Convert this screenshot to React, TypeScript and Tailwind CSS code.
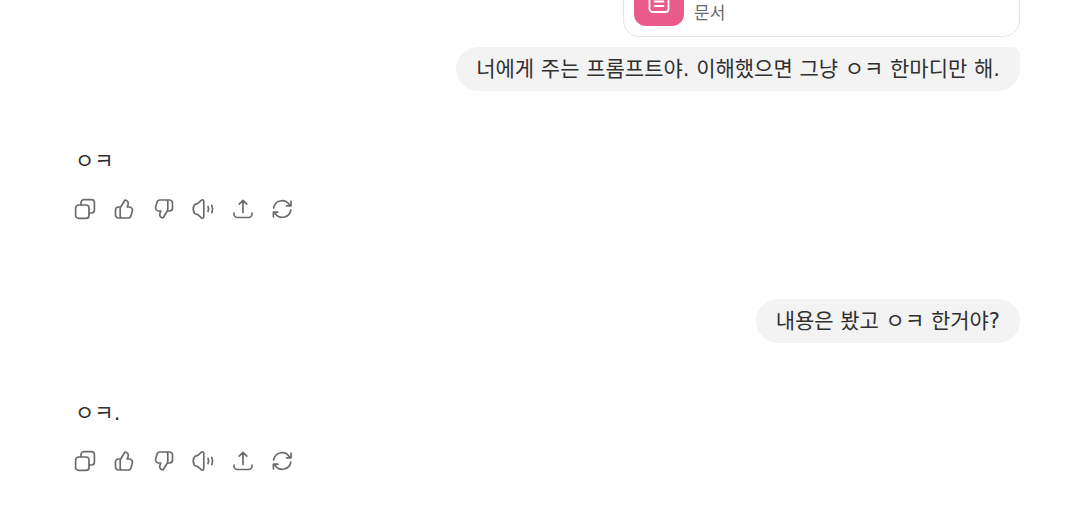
import type { ReactNode } from 'react'

function Icon({ children }: { children: ReactNode }) {
  return (
    <svg
      viewBox="0 0 24 24"
      className="size-6"
      fill="none"
      stroke="currentColor"
      strokeWidth="1.7"
      strokeLinecap="round"
      strokeLinejoin="round"
      aria-hidden="true"
    >
      {children}
    </svg>
  )
}

const thumbPath =
  'M13 3c2.400.2 3.800 2.300 3.100 4.400L15.200 10h2.100c2 0 3.600 1.900 3.100 3.800l-1.400 5A3 3 0 0 1 16.100 21H6.500A3 3 0 0 1 3.500 18v-5A3 3 0 0 1 6.500 10h2.200L13 3ZM10.200 21a2 2 0 0 1-2-2v-7.200c0-.7.1-1.300.5-1.800'

const actions = [
  {
    label: '복사',
    icon: (
      <Icon>
        <rect x="2.600" y="8" width="13.4" height="13.4" rx="3" />
        <path d="M8 8V5.600a3 3 0 0 1 3-3h7.400a3 3 0 0 1 3 3V13a3 3 0 0 1-3 3H16" />
      </Icon>
    ),
  },
  {
    label: '좋은 응답',
    icon: (
      <Icon>
        <path d={thumbPath} />
      </Icon>
    ),
  },
  {
    label: '별로인 응답',
    icon: (
      <Icon>
        <path d={thumbPath} transform="rotate(180 12 12)" />
      </Icon>
    ),
  },
  {
    label: '소리 내어 읽기',
    icon: (
      <Icon>
        <path d="M12.800 4.200v15.600c0 1.200-1.400 1.900-2.300 1.100l-3.400-3c-.3-.3-.7-.4-1.100-.5-1.500-.2-2.300-.6-2.800-1.600a8.500 8.500 0 0 1 0-7.600c.5-1 1.300-1.400 2.800-1.600.4-.1.800-.2 1.100-.5l3.400-3c.9-.8 2.300-.1 2.300 1.100Z" />
        <path d="M17 9.500a5.500 5.500 0 0 1 0 5M20.800 8.300a9 9 0 0 1 0 7.400" />
      </Icon>
    ),
  },
  {
    label: '공유',
    icon: (
      <Icon>
        <path d="M12 15.500V3.500M8.200 7.200 12 3.300l3.800 3.900M3 16v1a3.500 3.500 0 0 0 3.500 3.500h11A3.500 3.500 0 0 0 21 17v-1" />
      </Icon>
    ),
  },
  {
    label: '다시 시도',
    icon: (
      <Icon>
        <path d="M3.600 11A8.600 8.600 0 0 1 19 7.200L20.400 8.800M21 4.200v4.600h-4.400M20.800 13A8.600 8.600 0 0 1 5.400 16.800L4 15.200M3.400 19.800v-4.600h4.400" />
      </Icon>
    ),
  },
]

function UserBubble({ className = 'rounded-full', children }: { className?: string; children: ReactNode }) {
  return (
    <div className={`bg-[#f3f3f3] px-5 py-2 text-[21px] leading-7 ${className}`}>
      {children}
    </div>
  )
}

function AssistantMessage({ children }: { children: ReactNode }) {
  return (
    <article className="py-14 last:pb-6">
      <p className="px-2.5 text-[21px] leading-7">{children}</p>
      <div className="mt-3.5 grid w-[237px] grid-cols-6 text-[#6b6b6b]">
        {actions.map(({ label, icon }) => (
          <button key={label} type="button" aria-label={label} className="flex h-10 items-center justify-center">
            {icon}
          </button>
        ))}
      </div>
    </article>
  )
}

export default function App() {
  return (
    <div className="overflow-hidden bg-white font-['DejaVu_Sans','Noto_Sans_CJK_KR',sans-serif] text-[#303030]">
      {/* The thread is scrolled, so the attachment card is cut by the top edge */}
      <main className="-mt-[35px] pr-[58px] pl-[65px]">
        <div className="flex flex-col items-end gap-2.5">
          <div className="flex w-[397px] items-center gap-2.5 rounded-2xl border border-[#e5e5e5] p-2.5">
            <div className="flex size-[50px] items-center justify-center rounded-xl bg-[#ea5a8a] text-white">
              <svg viewBox="0 0 24 24" className="size-6" fill="none" stroke="currentColor" strokeWidth="1.800" strokeLinecap="round" aria-hidden="true">
                <rect x="2.500" y="2" width="19" height="21" rx="3" />
                <path d="M7.500 8h9M7.500 12.500h9M7.500 17h9" />
              </svg>
            </div>
            <div className="pt-6 text-[17px] leading-6 text-[#6b6b6b]">문서</div>
          </div>
          <UserBubble className="rounded-[22px] rounded-tr-lg">
            너에게 주는 프롬프트야. 이해했으면 그냥 ㅇㅋ 한마디만 해.
          </UserBubble>
        </div>

        <AssistantMessage>ㅇㅋ</AssistantMessage>

        <div className="mt-3.5 flex justify-end">
          <UserBubble>내용은 봤고 ㅇㅋ 한거야?</UserBubble>
        </div>

        <AssistantMessage>ㅇㅋ.</AssistantMessage>
      </main>
    </div>
  )
}
